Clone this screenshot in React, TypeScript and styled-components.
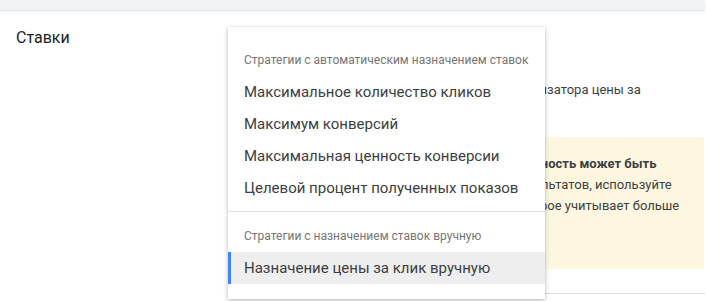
import styled, { createGlobalStyle } from "styled-components";

const GlobalStyle = createGlobalStyle`
  html, body {
    margin: 0;
    padding: 0;
    background: #ffffff;
    font-family: Roboto, "Noto Sans", Arial, sans-serif;
    overflow: hidden;
  }
`;

const Page = styled.div`
  position: relative;
  width: 705px;
  height: 301px;
`;

const TopBar = styled.div`
  height: 10px;
  background-color: #f1f3f4;
  border-bottom: 1px solid #e6e6e6;
  box-shadow: 0 1px 2px rgba(0, 0, 0, 0.06);
`;

const Section = styled.div`
  display: grid;
  grid-template-columns: 276px 1fr;
`;

const SectionTitle = styled.div`
  padding: 17px 0 0 16px;
  font-size: 16px;
  line-height: 20px;
  color: #202124;
`;

const Content = styled.div`
  padding-top: 16px;
  padding-right: 1px;
  border-bottom: 1px solid #dadce0;
  padding-bottom: 24px;
`;

const SelectField = styled.div`
  height: 36px;
  font-size: 14px;
  line-height: 36px;
  color: #3c4043;
`;

const Description = styled.p`
  margin: 16px 0 0;
  font-size: 13px;
  line-height: 21px;
  color: #3c4043;
  white-space: nowrap;
`;

const Notice = styled.div`
  margin-top: 16px;
  padding: 16px 16px 32px;
  background-color: #fef7e0;
  font-size: 13px;
  line-height: 21px;
  color: #3c4043;
  white-space: nowrap;

  b {
    font-weight: 700;
  }
`;

const Menu = styled.div`
  position: absolute;
  left: 228px;
  top: 27px;
  width: 317px;
  height: 272px;
  box-sizing: border-box;
  padding: 9px 0 15px;
  background: #ffffff;
  box-shadow: 0 2px 5px rgba(0, 0, 0, 0.22), 0 0 2px rgba(0, 0, 0, 0.12);
`;

const Group = styled.div<{ $divided?: boolean }>`
  padding-bottom: ${({ $divided }) => ($divided ? "7px" : "0")};
  border-bottom: ${({ $divided }) => ($divided ? "1px solid #e0e0e0" : "none")};
`;

const GroupHeader = styled.div`
  height: 40px;
  box-sizing: border-box;
  padding: 16px 16px 8px;
  font-size: 12px;
  line-height: 16px;
  color: #757575;
  white-space: nowrap;
`;

const Item = styled.div<{ $selected?: boolean }>`
  height: 32px;
  box-sizing: border-box;
  padding-left: 13px;
  font-size: 15px;
  line-height: 32px;
  color: #3c4043;
  white-space: nowrap;
  background-color: ${({ $selected }) => ($selected ? "#eeeeee" : "transparent")};
  border-left: 3px solid ${({ $selected }) => ($selected ? "#4285f4" : "transparent")};
`;

const groups = [
  {
    title: "Стратегии с автоматическим назначением ставок",
    items: [
      "Максимальное количество кликов",
      "Максимум конверсий",
      "Максимальная ценность конверсии",
      "Целевой процент полученных показов",
    ],
  },
  {
    title: "Стратегии с назначением ставок вручную",
    items: ["Назначение цены за клик вручную"],
  },
];

const selected = "Назначение цены за клик вручную";

export default function App() {
  return (
    <Page>
      <GlobalStyle />
      <TopBar />
      <Section>
        <SectionTitle>Ставки</SectionTitle>
        <Content>
          <SelectField>{selected}</SelectField>
          <Description>
            Ставки заданы вручную с помощью оптимизатора цены за
            <br />
            клик.
          </Description>
          <Notice>
            <b>Обратите внимание, что ваша эффективность может быть</b>
            <br />
            выше. Чтобы добиться более ярких результатов, используйте
            <br />
            автоматическую стратегию ставок, которое учитывает больше
            <br />
            сигналов аукциона.
          </Notice>
        </Content>
      </Section>
      <Menu>
        {groups.map((group, gi) => (
          <Group key={gi} $divided={gi < groups.length - 1}>
            <GroupHeader>{group.title}</GroupHeader>
            {group.items.map((item) => (
              <Item key={item} $selected={item === selected}>
                {item}
              </Item>
            ))}
          </Group>
        ))}
      </Menu>
    </Page>
  );
}
